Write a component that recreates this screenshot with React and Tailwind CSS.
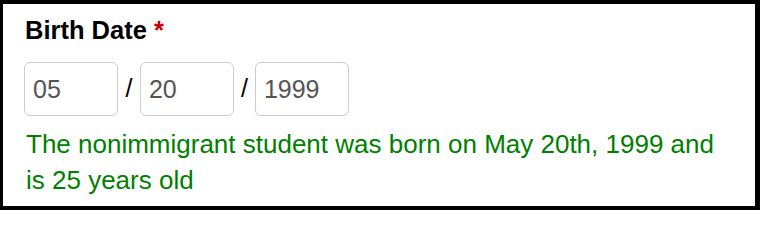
export default function App() {
  const font = { fontFamily: '"Liberation Sans", Arial, sans-serif' };
  return (
    <div
      className="w-[760px] h-[210px] bg-white border-black border-t-4 border-l-[3px] border-r-[5px] border-b-4 px-[21px] pt-[12px]"
      style={font}
    >
      <label className="block pl-[1px] text-[25.5px] leading-[28px] font-bold text-black">
        Birth Date <span className="text-[#cc0000]">*</span>
      </label>
      <div className="flex items-center mt-[18px]">
        <input
          defaultValue="05"
          className="w-[94px] h-[54px] border border-[#cccccc] rounded-[6px] px-[8px] text-[25px] text-[#555555] outline-none"
        />
        <span className="mx-[7.5px] text-[25px] text-black">/</span>
        <input
          defaultValue="20"
          className="w-[94px] h-[54px] border border-[#cccccc] rounded-[6px] px-[8px] text-[25px] text-[#555555] outline-none"
        />
        <span className="mx-[7px] text-[25px] text-black">/</span>
        <input
          defaultValue="1999"
          className="w-[94px] h-[54px] border border-[#cccccc] rounded-[6px] px-[8px] text-[25px] text-[#555555] outline-none"
        />
      </div>
      <p className="mt-[10px] pl-[2px] text-[26px] leading-[36px] text-[#008000]">
        The nonimmigrant student was born on May 20th, 1999 and is 25 years old
      </p>
    </div>
  );
}
